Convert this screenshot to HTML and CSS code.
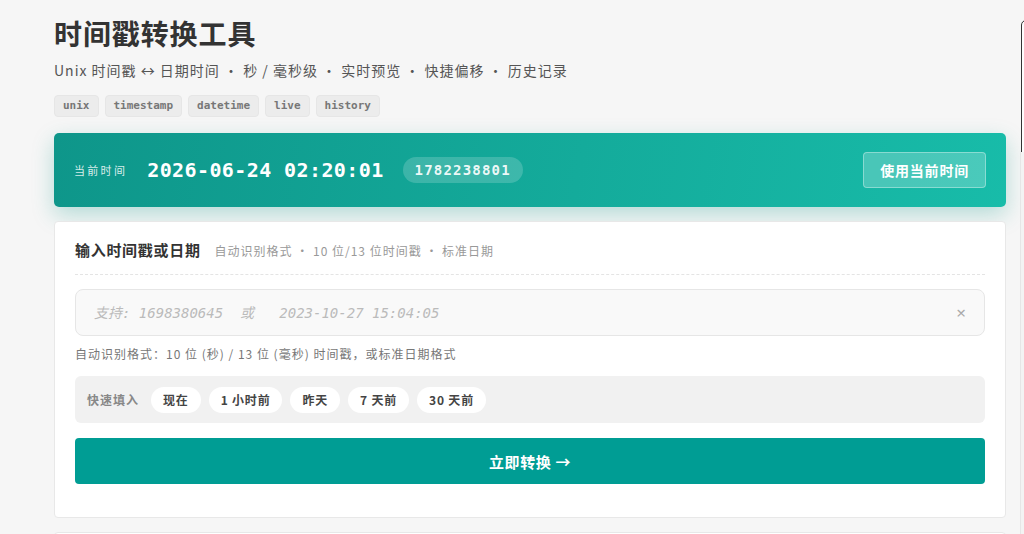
FILE: index.html
```html
<!DOCTYPE html>
<html lang="zh-CN">
<head>
    <meta charset="UTF-8">
    <meta name="viewport" content="width=device-width, initial-scale=1.0">
    <title>时间戳转换工具</title>
    <link rel="stylesheet" href="styles.css">
</head>
<body>
    <div class="page">
        <h1 class="title">时间戳转换工具</h1>
        <p class="subtitle">Unix 时间戳 ↔ 日期时间 · 秒 / 毫秒级 · 实时预览 · 快捷偏移 · 历史记录</p>
        <div class="tags">
            <span class="tag">unix</span>
            <span class="tag">timestamp</span>
            <span class="tag">datetime</span>
            <span class="tag">live</span>
            <span class="tag">history</span>
        </div>

        <!-- 当前时间 -->
        <div class="now_bar">
            <span class="now_label">当前时间</span>
            <span class="now_time">2026-06-24 02:20:01</span>
            <span class="now_ts">1782238801</span>
            <button class="now_btn">使用当前时间</button>
        </div>

        <!-- 输入区 -->
        <div class="card">
            <div class="card_head">
                <span class="card_title">输入时间戳或日期</span>
                <span class="card_desc">自动识别格式 · 10 位/13 位时间戳 · 标准日期</span>
            </div>
            <div class="input_box">
                <input type="text" id="ts-input" placeholder="支持: 1698380645  或   2023-10-27 15:04:05">
                <span class="clear">×</span>
            </div>
            <p class="hint">自动识别格式：10 位 (秒) / 13 位 (毫秒) 时间戳，或标准日期格式</p>
            <div class="quick">
                <span class="quick_label">快速填入</span>
                <button class="chip">现在</button>
                <button class="chip">1 小时前</button>
                <button class="chip">昨天</button>
                <button class="chip">7 天前</button>
                <button class="chip">30 天前</button>
            </div>
            <button class="convert">立即转换 →</button>
        </div>
        <div class="card card_next"></div>
    </div>

    <div class="side_toast"></div>
    <div class="side_panel"></div>
</body>
</html>
```

FILE: styles.css
```css
        body {
            margin: 0;
            background: #f6f6f6;
            font-family: "Noto Sans CJK SC", "Noto Sans", sans-serif;
            color: #333;
            overflow: hidden;
        }

        .page {
            width: 952px;
            padding: 13px 0 0 54px;
        }

        .title {
            margin: 0;
            font-size: 28px;
            line-height: 40px;
            font-weight: 700;
            letter-spacing: 0.9px;
            color: #333;
        }

        .subtitle {
            margin: 7px 0 0;
            font-size: 14px;
            line-height: 20px;
            color: #555;
            letter-spacing: 1px;
        }

        .tags {
            display: flex;
            gap: 6px;
            margin-top: 15px;
        }

        .tag {
            font-family: "DejaVu Sans Mono", monospace;
            font-size: 11px;
            font-weight: 700;
            line-height: 20px;
            padding: 0 8px;
            background: #ececec;
            border: 1px solid #e6e6e6;
            border-radius: 4px;
            color: #777;
        }

        .now_bar {
            display: flex;
            align-items: center;
            height: 74px;
            margin-top: 16px;
            padding: 0 20px;
            box-sizing: border-box;
            border-radius: 5px;
            background: linear-gradient(100deg, #0e968a 0%, #14ab9b 55%, #18bca9 100%);
            box-shadow: 0 8px 22px rgba(16, 150, 136, 0.28);
            color: white;
        }

        .now_label {
            font-size: 11px;
            letter-spacing: 2.3px;
            color: rgba(255, 255, 255, 0.85);
            margin-right: 20px;
        }

        .now_time {
            font-family: "DejaVu Sans Mono", monospace;
            font-size: 20px;
            font-weight: 700;
            letter-spacing: 0.4px;
            margin-right: 19px;
        }

        .now_ts {
            font-family: "DejaVu Sans Mono", monospace;
            font-size: 14px;
            font-weight: 700;
            letter-spacing: 1.2px;
            line-height: 26px;
            padding: 0 12px;
            border-radius: 13px;
            background: rgba(255, 255, 255, 0.18);
            color: rgba(255, 255, 255, 0.92);
        }

        .now_btn {
            margin-left: auto;
            height: 36px;
            padding: 0 16px;
            font-family: inherit;
            font-size: 14px;
            font-weight: 700;
            letter-spacing: 0.8px;
            color: white;
            background: rgba(255, 255, 255, 0.22);
            border: 1px solid rgba(255, 255, 255, 0.35);
            border-radius: 4px;
            cursor: pointer;
        }

        .card {
            margin-top: 14px;
            padding: 18px 20px 33px;
            background: white;
            border: 1px solid #e8e8e8;
            border-radius: 4px;
        }

        .card_head {
            display: flex;
            align-items: baseline;
            gap: 14px;
            line-height: 20px;
            padding-bottom: 13px;
            border-bottom: 1px dashed #e4e4e4;
        }

        .card_title {
            font-size: 15px;
            font-weight: 700;
            letter-spacing: 0.7px;
            color: #333;
        }

        .card_desc {
            font-size: 12px;
            color: #999;
            letter-spacing: 1px;
        }

        .input_box {
            display: flex;
            align-items: center;
            height: 47px;
            margin-top: 14px;
            padding: 0 16px;
            box-sizing: border-box;
            background: #f9f9f9;
            border: 1px solid #e6e6e6;
            border-radius: 8px;
        }

        .input_box input {
            flex: 1;
            border: none;
            background: none;
            outline: none;
            font-family: "DejaVu Sans Mono", "Noto Sans CJK SC", monospace;
            font-size: 14px;
            font-style: italic;
            color: #333;
        }

        .input_box input::placeholder {
            color: #bbb;
        }

        .clear {
            font-family: "Noto Sans", sans-serif;
            font-size: 17px;
            color: #aaa;
            line-height: 1;
            margin-right: 2px;
        }

        .hint {
            margin: 9px 0 0;
            font-size: 12px;
            line-height: 18px;
            color: #777;
            letter-spacing: 1px;
        }

        .quick {
            display: flex;
            align-items: center;
            gap: 8px;
            height: 47px;
            margin-top: 13px;
            padding: 0 12px;
            background: #f1f1f1;
            border-radius: 6px;
        }

        .quick_label {
            font-size: 12px;
            font-weight: 700;
            letter-spacing: 1px;
            color: #888;
            margin-right: 4px;
        }

        .chip {
            height: 26px;
            padding: 0 12px;
            font-family: inherit;
            font-size: 12px;
            font-weight: 700;
            letter-spacing: 0.8px;
            color: #444;
            background: white;
            border: none;
            border-radius: 13px;
            cursor: pointer;
        }

        .convert {
            display: block;
            width: 100%;
            height: 46px;
            margin-top: 15px;
            font-family: inherit;
            font-size: 15px;
            font-weight: 700;
            letter-spacing: 0.6px;
            color: white;
            background: #009d94;
            border: none;
            border-radius: 4px;
            cursor: pointer;
        }

        .card_next {
            height: 40px;
            padding: 0;
        }

        .side_toast {
            position: fixed;
            left: 1021px;
            top: 20px;
            width: 200px;
            height: 135px;
            background: #fdfdfd;
            border: 1.5px solid #333;
            border-radius: 5px;
        }

        .side_panel {
            position: fixed;
            left: 1020px;
            top: 152px;
            bottom: 0;
            width: 200px;
            background: #f3f3f3;
            border-left: 1px solid #e6e6e6;
        }
```
